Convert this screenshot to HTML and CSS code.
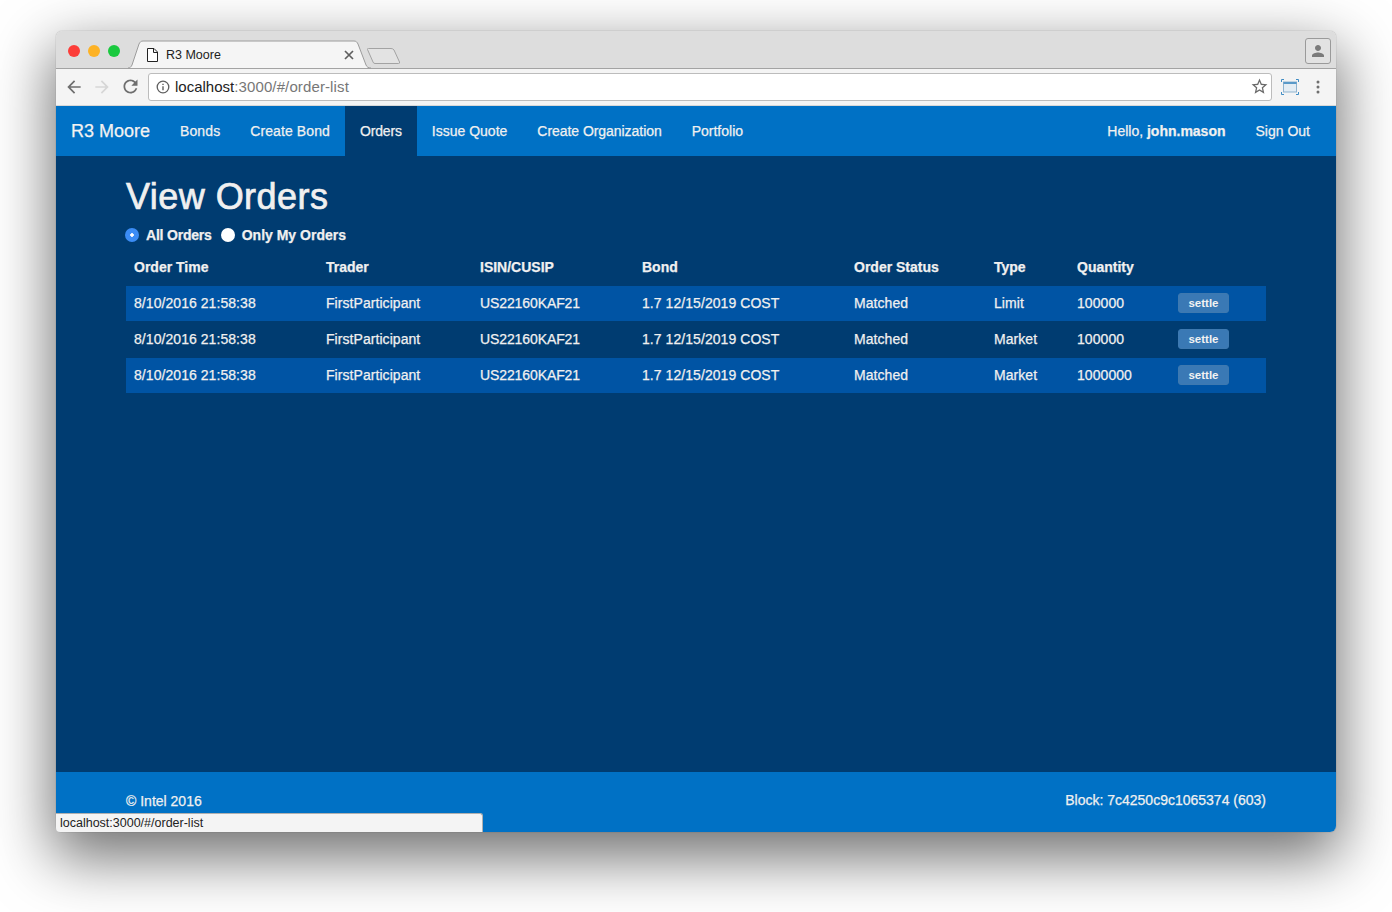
FILE: index.html
```html
<!DOCTYPE html>
<html lang="en">
<head>
<meta charset="utf-8">
<title>R3 Moore</title>
<link rel="stylesheet" href="styles.css">
</head>
<body>
<div class="window">
  <div class="titlebar">
    <div class="lights"><i class="light red"></i><i class="light yellow"></i><i class="light green"></i></div>
    <div class="tab">
      <svg class="tab-shape" width="244" height="29" viewBox="0 0 244 29"><path d="M0 28C2 28 3 27 4 25L11 4C12 2 13 1 15 1H226C228 1 229 2 230 4L238 25C239 27 240 28 243 28" fill="#f5f5f5" stroke="#9c9c9c"/></svg>
      <svg class="doc" width="11" height="14" viewBox="0 0 11 14"><path d="M.5.5H7L10.500 4V13.500H.5ZM6.500.5V4.500H10.500" fill="#fff" stroke="#222"/></svg>
      <span class="tab-title">R3 Moore</span>
      <svg class="tab-close" width="10" height="10" viewBox="0 0 10 10"><path d="M1 1L9 9M9 1L1 9" stroke="#5f5f5f" stroke-width="1.700"/></svg>
    </div>
    <svg class="newtab" width="35" height="17" viewBox="0 0 35 17"><path d="M1.500 1.500Q1 .5 2.500 .5H25Q27 .5 28 2L33.500 14Q34 15.500 32.500 15.500H9Q7.500 15.500 7 14Z" fill="#e3e3e3" stroke="#a3a3a3"/></svg>
    <div class="title-spacer"></div>
    <div class="profile"><svg width="18" height="18" viewBox="0 0 24 24"><path d="M12 12c2.210 0 4-1.790 4-4s-1.790-4-4-4-4 1.790-4 4 1.790 4 4 4zm0 2c-2.670 0-8 1.340-8 4v2h16v-2c0-2.660-5.330-4-8-4z" fill="#7b7b7b"/></svg></div>
  </div>
  <div class="toolbar">
    <span class="tool"><svg width="20" height="20" viewBox="0 0 24 24"><path d="M20 11H7.830l5.590-5.590L12 4l-8 8 8 8 1.410-1.410L7.830 13H20v-2z" fill="#6e6e6e"/></svg></span>
    <span class="tool"><svg width="20" height="20" viewBox="0 0 24 24"><path d="M4 11h12.170l-5.590-5.590L12 4l8 8-8 8-1.410-1.410L16.170 13H4v-2z" fill="#d6d6d6"/></svg></span>
    <span class="tool"><svg width="21" height="21" viewBox="0 0 24 24"><path d="M17.650 6.350C16.200 4.900 14.210 4 12 4c-4.420 0-7.990 3.580-7.990 8s3.570 8 7.990 8c3.730 0 6.840-2.550 7.730-6h-2.080c-.82 2.330-3.040 4-5.650 4-3.310 0-6-2.690-6-6s2.690-6 6-6c1.660 0 3.140.69 4.220 1.780L13 11h7V4l-2.350 2.350z" fill="#6e6e6e"/></svg></span>
    <div class="omnibox">
      <svg class="info" width="14" height="14" viewBox="0 0 14 14"><circle cx="7" cy="7" r="5.800" fill="none" stroke="#5f5f5f" stroke-width="1.300"/><path d="M7 6.200V10.200M7 3.700V5.100" stroke="#5f5f5f" stroke-width="1.400"/></svg>
      <span class="url"><span class="host">localhost</span>:3000/#/order-list</span>
      <svg class="star" width="19" height="19" viewBox="0 0 24 24"><path d="M22 9.240l-7.190-.62L12 2 9.190 8.630 2 9.240l5.460 4.730L5.820 21 12 17.270 18.180 21l-1.630-7.030L22 9.240zM12 15.400l-3.760 2.270 1-4.280-3.320-2.880 4.380-.38L12 6.100l1.710 4.040 4.380.38-3.320 2.880 1 4.280L12 15.400z" fill="#6a6a6a"/></svg>
    </div>
    <span class="tool cast"><svg width="18" height="16" viewBox="0 0 18 16"><rect x="2.500" y="3" width="13" height="10" fill="#e4edf4" stroke="#8fb3cf"/><rect x="2.500" y="3" width="13" height="2" fill="#5a9ac9"/><path d="M.5 3V.5H3M15 .5H17.500V3M.5 13V15.500H3M15 15.500H17.500V13" fill="none" stroke="#3f8cc4"/></svg></span>
    <span class="tool"><svg width="4" height="14" viewBox="0 0 4 14"><circle cx="2" cy="2" r="1.500" fill="#6e6e6e"/><circle cx="2" cy="7" r="1.500" fill="#6e6e6e"/><circle cx="2" cy="12" r="1.500" fill="#6e6e6e"/></svg></span>
  </div>
  <nav class="navbar">
    <a class="brand">R3 Moore</a>
    <a class="nav-link wide">Bonds</a>
    <a class="nav-link wide">Create Bond</a>
    <a class="nav-link narrow active">Orders</a>
    <a class="nav-link">Issue Quote</a>
    <a class="nav-link org">Create Organization</a>
    <a class="nav-link">Portfolio</a>
    <div class="nav-right">
      <a class="nav-link">Hello, <b>john.mason</b></a>
      <a class="nav-link">Sign Out</a>
    </div>
  </nav>
  <main class="content">
    <h1 class="page-title">View Orders</h1>
    <div class="filters">
      <label class="radio tight"><input type="radio" name="f" checked>All Orders</label>
      <label class="radio"><input type="radio" name="f">Only My Orders</label>
    </div>
    <table class="orders">
      <thead>
        <tr><th class="c1">Order Time</th><th class="c2">Trader</th><th class="c3">ISIN/CUSIP</th><th class="c4">Bond</th><th class="c5">Order Status</th><th class="c6">Type</th><th class="c7">Quantity</th><th></th></tr>
      </thead>
      <tbody>
        <tr><td>8/10/2016 21:58:38</td><td>FirstParticipant</td><td class="isin">US22160KAF21</td><td>1.7 12/15/2019 COST</td><td>Matched</td><td>Limit</td><td>100000</td><td><button class="settle">settle</button></td></tr>
        <tr><td>8/10/2016 21:58:38</td><td>FirstParticipant</td><td class="isin">US22160KAF21</td><td>1.7 12/15/2019 COST</td><td>Matched</td><td>Market</td><td>100000</td><td><button class="settle">settle</button></td></tr>
        <tr><td>8/10/2016 21:58:38</td><td>FirstParticipant</td><td class="isin">US22160KAF21</td><td>1.7 12/15/2019 COST</td><td>Matched</td><td>Market</td><td>1000000</td><td><button class="settle">settle</button></td></tr>
      </tbody>
    </table>
  </main>
  <footer class="footer">
    <span class="copy">© Intel 2016</span>
    <span class="block">Block: 7c4250c9c1065374 (603)</span>
  </footer>
  <div class="status-bubble">localhost:3000/#/order-list</div>
</div>
</body>
</html>
```

FILE: styles.css
```css
* { box-sizing: border-box; }
html, body { margin: 0; height: 100%; background: #fff; overflow: hidden; }
body {
  padding: 31px 0 0 56px;
  font-family: "Liberation Sans", Arial, sans-serif;
  font-size: 14px;
  color: #f0f0f0;
}
.window {
  position: relative;
  width: 1280px;
  height: 801px;
  display: flex;
  flex-direction: column;
  border-radius: 6px;
  box-shadow: 0 22px 60px 4px rgba(0,0,0,.56), 0 0 1px rgba(0,0,0,.5);
}
.titlebar {
  height: 38px;
  flex: none;
  display: flex;
  align-items: flex-start;
  background: #dddddd;
  border-bottom: 1px solid #a3a3a3;
  border-radius: 6px 6px 0 0;
}
.lights { display: flex; gap: 8px; padding: 14px 0 0 12px; width: 72px; flex: none; }
.light { width: 12px; height: 12px; border-radius: 50%; display: block; }
.red { background: #fc3d39; }
.yellow { background: #fdb225; }
.green { background: #1ac93f; }
.tab {
  position: relative;
  width: 244px;
  height: 38px;
  flex: none;
  display: flex;
  align-items: center;
  padding: 10px 18px 0 19px;
  margin-bottom: -1px;
}
.tab-shape { position: absolute; left: 0; top: 9px; }
.doc, .tab-title, .tab-close { position: relative; }
.doc { flex: none; }
.tab-title { margin-left: 8px; font-size: 12.500px; color: #222; flex: 1; }
.tab-close { flex: none; }
.newtab { margin: 17px 0 0 -6px; flex: none; }
.title-spacer { flex: 1; }
.profile {
  width: 26px;
  height: 26px;
  margin: 7px 5px 0 0;
  border: 1px solid #9a9a9a;
  border-radius: 3px;
  background: #e2e2e2;
  display: flex;
  align-items: center;
  justify-content: center;
}
.toolbar {
  height: 37px;
  flex: none;
  display: flex;
  align-items: center;
  padding: 0 4px 1px 4px;
  background: #f4f4f4;
  border-bottom: 1px solid #d8d8d8;
}
.tool { width: 28px; height: 28px; flex: none; display: flex; align-items: center; justify-content: center; }
.omnibox {
  flex: 1;
  height: 28px;
  margin: 0 4px;
  display: flex;
  align-items: center;
  padding: 0 2px 0 7px;
  background: #fff;
  border: 1px solid #bcbcbc;
  border-radius: 3px;
}
.info { flex: none; }
.url { margin-left: 5px; flex: 1; font-size: 15px; letter-spacing: .12px; color: #777; }
.host { color: #222; letter-spacing: 0; }
.star { flex: none; }
.navbar {
  height: 50px;
  flex: none;
  display: flex;
  background: #0071c5;
  -webkit-text-stroke: .25px;
}
.brand { padding: 0 15px; line-height: 50px; font-size: 18px; color: #f2f2f2; }
.nav-link { padding: 0 15px; line-height: 50px; color: #f0f0f0; }
.nav-link.wide { letter-spacing: .1px; }
.nav-link.narrow { letter-spacing: -.15px; }
.nav-link.org { letter-spacing: -.05px; }
.nav-link.active { background: #003c71; }
.nav-right { margin-left: auto; margin-right: 11px; display: flex; }
.content {
  flex: 1;
  padding: 0 70px;
  background: #003c71;
  -webkit-text-stroke: .25px;
}
.page-title {
  margin: 21px 0 8px;
  font-size: 36px;
  line-height: 40px;
  font-weight: 400;
  letter-spacing: .45px;
  -webkit-text-stroke: .7px;
  color: #f0f0f0;
}
.filters { display: flex; gap: 9px; height: 20px; align-items: center; font-weight: 700; }
.radio { display: flex; align-items: center; }
.radio.tight { letter-spacing: -.2px; }
.radio input {
  appearance: none;
  width: 14px;
  height: 14px;
  margin: 0 7px 0 0;
  border-radius: 50%;
  background: #fff;
}
.radio.tight input { margin-left: -1px; }
.radio input:checked { background: radial-gradient(circle, #fff 0 1.500px, #3b8cf5 2px); }
.orders {
  width: 1140px;
  margin-top: 4px;
  border-collapse: collapse;
  table-layout: fixed;
}
.orders th { height: 36px; padding: 0 8px; text-align: left; font-weight: 700; }
.c1 { width: 192px; }
.c2 { width: 154px; }
.c3 { width: 162px; }
.c4 { width: 212px; }
.c5 { width: 140px; }
.c6 { width: 83px; }
.c7 { width: 101px; }
.orders td { height: 36px; padding: 0 8px; border-top: 1px solid #003c71; letter-spacing: .06px; }
.orders td.isin { letter-spacing: -.1px; }
.orders tbody tr:nth-child(odd) { background: #0054a4; }
.settle {
  display: block;
  width: 51px;
  height: 20px;
  padding: 0;
  border: 1px solid #3e79b0;
  border-radius: 3px;
  background: #3a79b5;
  color: #f2f2f2;
  font: 700 11.500px "Liberation Sans", sans-serif;
  -webkit-text-stroke: 0;
}
.footer {
  height: 60px;
  flex: none;
  display: flex;
  justify-content: space-between;
  padding: 20px 70px 0;
  background: #0071c5;
  border-radius: 0 0 6px 6px;
  -webkit-text-stroke: .25px;
}
.copy { padding-top: 1px; }
.status-bubble {
  position: absolute;
  left: 0;
  bottom: 0;
  width: 427px;
  height: 19px;
  padding: 2px 0 0 4px;
  font-size: 12.500px;
  line-height: 15px;
  color: #222;
  background: #f4f4f4;
  border: 1px solid #b0b0b0;
  border-left: 0;
  border-bottom: 0;
  border-radius: 0 3px 0 4px;
}
```
